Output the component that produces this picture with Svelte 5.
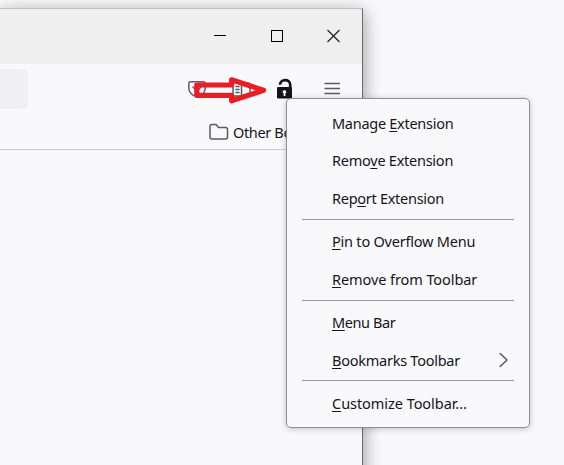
<script>
  const groups = [
    [
      { pre: 'Manage ', key: 'E', post: 'xtension', track: -0.28 },
      { pre: 'Remo', key: 'v', post: 'e Extension', track: -0.25 },
      { pre: 'Rep', key: 'o', post: 'rt Extension', track: -0.28 }
    ],
    [
      { pre: '', key: 'P', post: 'in to Overflow Menu', track: -0.22 },
      { pre: '', key: 'R', post: 'emove from Toolbar', track: -0.08 }
    ],
    [
      { pre: '', key: 'M', post: 'enu Bar', track: -0.4 },
      { pre: '', key: 'B', post: 'ookmarks Toolbar', track: -0.25, submenu: true }
    ],
    [{ pre: '', key: 'C', post: 'ustomize Toolbar...', track: -0.05 }]
  ];
</script>

<div class="desktop">
  <div class="window">
    <div class="titlebar">
      <svg width="150" height="20" viewBox="0 0 150 20" fill="none" stroke="#000">
        <path d="M5 9.5H17" />
        <rect x="62.5" y="4.5" width="11" height="11" />
        <path d="M118.5 4L130.5 16M130.5 4L118.5 16" stroke="#222" stroke-width="1.2" />
      </svg>
    </div>
    <div class="navbar">
      <div class="urlbar"></div>
      <svg class="tools" width="170" height="36" viewBox="180 72 170 36" fill="none">
        <g stroke="#5b5b66" stroke-width="1.5" stroke-linecap="round" stroke-linejoin="round">
          <path d="M190.5 81.8H203.5Q205.2 81.8 205.2 83.5V88A8.2 8.2 0 0 1 188.8 88V83.5Q188.8 81.8 190.5 81.8Z" />
          <path d="M193 87L197 91L201 87" />
          <path d="M233 82.5H241.500V96H234.5Q233 96 233 94.5ZM241.500 83H248Q250 83 250 85V94Q250 96 248 96H241.500" />
          <path d="M236 86.5H239M236 89.5H239M236 92.5H239" />
        </g>
        <rect x="277" y="87" width="15" height="11.5" rx="1.2" fill="#15141a" />
        <path d="M280 84.8C280.2 78.6 290.2 78.4 290.2 84.8V88" stroke="#15141a" stroke-width="2.7" />
        <path d="M284.5 90.2a1.7 1.7 0 0 1 .9 3.2V96h-1.8v-2.6a1.7 1.7 0 0 1 .9-3.2Z" fill="#fff" />
        <path d="M325 83.5H339.5M325 88.5H339.5M325 93.5H339.5" stroke="#5b5b66" stroke-width="1.3" stroke-linecap="round" />
        <path d="M196.8 85H231.6V79.8L263.5 90.3L231.6 100.8V95.3H196.8Z" stroke="#ed1c24" stroke-width="5.2" stroke-linejoin="round" />
      </svg>
    </div>
    <div class="bookmarks">
      <svg width="20" height="18" viewBox="0 0 20 18" fill="none" stroke="#5b5b66" stroke-width="1.5" stroke-linejoin="round">
        <path d="M1 3.5Q1 1.5 3 1.5H7L9.5 4.5H16.5Q18.5 4.5 18.5 6.5V14Q18.5 16 16.5 16H3Q1 16 1 14Z" />
      </svg>
      <span>Other Bo</span>
    </div>
  </div>

  <div class="menu">
    {#each groups as group}
      <div class="group">
        {#each group as item}
          <div class="item">
            <span style="letter-spacing: {item.track}px">{item.pre}<span class="key">{item.key}</span>{item.post}</span>
            {#if item.submenu}
              <svg width="10" height="16" viewBox="0 0 10 16" fill="none" stroke="#5b5b66" stroke-width="1.6" stroke-linecap="round" stroke-linejoin="round">
                <path d="M1.2 1.5L8 8L1.2 14.5" />
              </svg>
            {/if}
          </div>
        {/each}
      </div>
    {/each}
  </div>
</div>

<style>
  :global(body) {
    margin: 0;
    background: #f9f9fb;
  }
  .desktop {
    position: relative;
    width: 564px;
    height: 465px;
    overflow: hidden;
    background: #f9f9fb;
    color: #15141a;
    font: 14.5px/20px "Noto Sans", "Open Sans", sans-serif;
  }
  .window {
    box-sizing: border-box;
    width: 363px;
    height: 520px;
    border-right: 1px solid #6c6c6c;
    border-top: 1px solid #bdbdbd;
    background: #f9f9fb;
    box-shadow: 1px 4px 17px rgba(0, 0, 0, 0.38);
    position: relative;
    top: 8px;
  }
  .titlebar {
    box-sizing: border-box;
    height: 55px;
    padding: 17px 3px 0 0;
    display: flex;
    justify-content: flex-end;
    background: #efefef;
  }
  .titlebar svg {
    display: block;
  }
  .navbar {
    box-sizing: border-box;
    height: 50px;
    padding: 5px 12px 0 0;
    display: flex;
    justify-content: space-between;
  }
  .urlbar {
    width: 28px;
    height: 40px;
    border-radius: 0 5px 5px 0;
    background: #f0f0f4;
  }
  .tools {
    margin-top: 3px;
  }
  .bookmarks {
    box-sizing: border-box;
    height: 36px;
    padding: 0 0 0 209px;
    display: flex;
    align-items: center;
    gap: 4px;
    white-space: nowrap;
    border-bottom: 1px solid #cccccd;
  }
  .bookmarks span {
    letter-spacing: -0.35px;
  }
  .menu {
    box-sizing: border-box;
    position: absolute;
    left: 286px;
    top: 98px;
    width: 244px;
    height: 330px;
    padding: 5px 15px;
    border: 1px solid #909094;
    border-radius: 5px;
    background: #f9f9fb;
    box-shadow: 0 1px 6px rgba(0, 0, 0, 0.22);
  }
  .group + .group {
    margin-top: 2.5px;
    padding-top: 2.5px;
    border-top: 1px solid #9b9b9f;
  }
  .group:nth-child(n + 3) {
    margin-top: 2px;
  }
  .item {
    height: 37.5px;
    padding: 0 5px 0 30px;
    display: flex;
    align-items: center;
    justify-content: space-between;
    white-space: nowrap;
  }
  .group + .group .item {
    height: 37.6px;
  }
  .key {
    text-decoration: underline;
    text-decoration-thickness: 1px;
    text-underline-offset: 2px;
    text-decoration-skip-ink: none;
  }
</style>
